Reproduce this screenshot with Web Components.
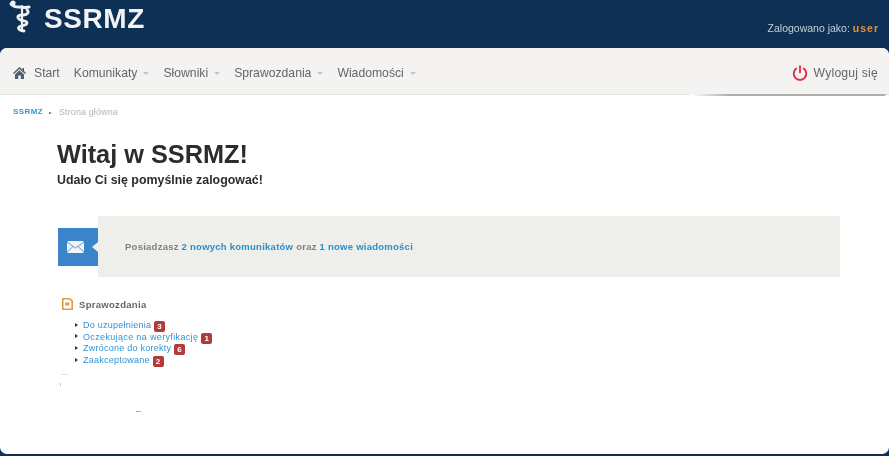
<!DOCTYPE html>
<html lang="pl">
<head>
<meta charset="utf-8">
<title>SSRMZ</title>
<style>
html,body{margin:0;padding:0;height:100%;}
body{background:#0e3055;font-family:"Liberation Sans",Arial,sans-serif;overflow:hidden;}
</style>
</head>
<body>
<app-shell>
  <top-bar slot="top" user="user"></top-bar>
  <main-nav slot="nav"></main-nav>
  <bread-crumbs></bread-crumbs>
  <welcome-box></welcome-box>
  <notice-box></notice-box>
  <report-list></report-list>
</app-shell>
<script>
class AppShell extends HTMLElement{
    constructor(){
        super();
        const el = this.attachShadow({mode:'open'})
        el.innerHTML = `
        <style>
        :host{display:flex;flex-direction:column;width:889px;height:456px;}
        .panel{
          flex:1;
          margin:0 0 2px 0;
          background:#fff;
          border-radius:7px;
          display:flex;
          flex-direction:column;
          overflow:hidden;
          filter:blur(.5px);
        }
        </style>
        <slot name="top"></slot>
        <div class="panel">
          <slot name="nav"></slot>
          <slot></slot>
        </div>`
    }
}
customElements.define('app-shell', AppShell)

class TopBar extends HTMLElement{
    constructor(){
        super();
        const el = this.attachShadow({mode:'open'})
        el.innerHTML = `
        <style>
        :host{display:flex;height:48px;flex:none;justify-content:space-between;background:#0e3055;filter:blur(.5px);}
        .brand{display:flex;align-items:flex-start;padding-left:9px;}
        svg{width:23px;height:34px;}
        h1{margin:2px 0 0 12px;font-size:28px;line-height:34px;font-weight:700;color:#f1f3f5;letter-spacing:.6px;}
        .who{align-self:flex-end;padding:0 10px 14px 0;font-size:10.500px;line-height:12px;color:#c6ced8;}
        b{color:#e8912c;letter-spacing:1px;}
        </style>
        <div class="brand">
          <svg viewBox="0 0 23 34" fill="none" stroke="#eef0f2" stroke-linecap="round">
            <path d="M2 4c2 3 5 3 8 3s7 1 10 0" stroke-width="3"/>
            <path d="M13 6v25" stroke-width="2.200"/>
            <path d="M18 10c3 2 0 5-4 5s-7 1-4 4 8 1 8 4-6 2-8 4 2 4 5 4" stroke-width="2.800"/>
            <circle cx="4" cy="3" r="2.600" fill="#eef0f2" stroke="none"/>
          </svg>
          <h1>SSRMZ</h1>
        </div>
        <div class="who">Zalogowano jako: <b>${this.getAttribute('user')}</b></div>`
    }
}
customElements.define('top-bar', TopBar)

class NavItem extends HTMLElement{
    constructor(){
        super();
        const el = this.attachShadow({mode:'open'})
        el.innerHTML = `
        <style>
        :host{display:inline-flex;align-items:center;font-size:12.200px;color:#5f6770;}
        i{margin-left:6px;margin-top:1px;border:3px solid transparent;border-top:3px solid #c4c4c4;border-bottom:0;}
        </style>
        <slot></slot>${this.hasAttribute('menu')?'<i></i>':''}`
    }
}
customElements.define('nav-item', NavItem)

class MainNav extends HTMLElement{
    constructor(){
        super();
        const el = this.attachShadow({mode:'open'})
        el.innerHTML = `
        <style>
        :host{display:flex;flex:none;align-items:center;background:#f5f3f2;border-bottom:1px solid #e4e4e2;position:relative;padding:4px 11px 0 13px;height:42px;}
        :host::after{content:"";position:absolute;left:690px;right:3px;bottom:-2px;height:2px;background:linear-gradient(90deg,#fff,#aeaeae 20%);border-radius:0 0 4px 4px;}
        ul{display:flex;align-items:center;list-style:none;margin:0;padding:0;flex:1;}
        li{display:flex;align-items:center;margin-right:14px;}
        li:first-child svg{width:13px;height:12px;margin-right:8px;}
        .out{display:flex;align-items:center;}
        .out svg{width:16px;height:16px;margin-right:6px;}
        .out nav-item{letter-spacing:.2px;}
        </style>
        <ul>
          <li><svg viewBox="0 0 13 12"><path fill="#4d5f70" d="M6.500 0 0 6l1 1 5.500-5 5.500 5 1-1-2-1.900V1H9.500v1.700zM2 7.500V12h3.200V8.500h2.600V12H11V7.500L6.500 3.300z"/></svg><nav-item>Start</nav-item></li>
          <li><nav-item menu>Komunikaty</nav-item></li>
          <li><nav-item menu>Słowniki</nav-item></li>
          <li><nav-item menu>Sprawozdania</nav-item></li>
          <li><nav-item menu>Wiadomości</nav-item></li>
        </ul>
        <div class="out">
          <svg viewBox="0 0 16 16" fill="none" stroke="#dc2f4a" stroke-width="1.900" stroke-linecap="round"><path d="M4.300 3.600a6.300 6.300 0 1 0 7.400 0"/><path d="M8 1.200v6"/></svg>
          <nav-item>Wyloguj się</nav-item>
        </div>`
    }
}
customElements.define('main-nav', MainNav)

class BreadCrumbs extends HTMLElement{
    constructor(){
        super();
        const el = this.attachShadow({mode:'open'})
        el.innerHTML = `
        <style>
        :host{display:flex;align-items:center;padding:11px 0 0 13px;height:12px;font-size:8px;line-height:12px;color:#b4b4b4;}
        a{color:#2f9bd8;font-weight:700;letter-spacing:.4px;}
        i{width:0;height:0;margin:2px 7px 0 6px;border:1.500px solid transparent;border-left:3px solid #555;border-right:0;}
        span{font-size:9px;letter-spacing:.1px;}
        </style>
        <a>SSRMZ</a><i></i><span>Strona główna</span>`
    }
}
customElements.define('bread-crumbs', BreadCrumbs)

class WelcomeBox extends HTMLElement{
    constructor(){
        super();
        const el = this.attachShadow({mode:'open'})
        el.innerHTML = `
        <style>
        :host{display:block;padding:19px 0 0 57px;color:#2c2c2c;}
        h2{margin:0;font-size:25.300px;line-height:34px;font-weight:700;}
        p{margin:0;font-size:12.400px;line-height:18px;font-weight:700;}
        </style>
        <h2>Witaj w SSRMZ!</h2>
        <p>Udało Ci się pomyślnie zalogować!</p>`
    }
}
customElements.define('welcome-box', WelcomeBox)

class NoticeBox extends HTMLElement{
    constructor(){
        super();
        const el = this.attachShadow({mode:'open'})
        el.innerHTML = `
        <style>
        :host{display:flex;align-items:center;margin:27px 49px 0 58px;height:61px;}
        .tile{width:40px;height:38px;flex:none;background:#3a84c9;display:flex;align-items:center;padding-left:9px;box-sizing:border-box;position:relative;}
        .tile::after{content:"";position:absolute;right:0;top:14px;border:5px solid transparent;border-right:6px solid #eeeeea;border-left:0;}
        svg{width:17px;height:12px;}
        .txt{flex:1;align-self:stretch;display:flex;align-items:center;background:#eeeeea;padding-left:27px;font-size:9.500px;font-weight:700;color:#808080;letter-spacing:.25px;white-space:pre;}
        a{color:#2b8fcf;}
        </style>
        <div class="tile">
          <svg viewBox="0 0 17 12"><rect width="17" height="12" rx="1.500" fill="#f1f4f8"/><path d="M0 1l8.500 6L17 1M0 11l6-5.500M17 11l-6-5.500" fill="none" stroke="#3a84c9" stroke-width=".8"/></svg>
        </div>
        <div class="txt">Posiadzasz <a>2 nowych komunikatów</a> oraz <a>1 nowe wiadomości</a></div>`
    }
}
customElements.define('notice-box', NoticeBox)

class CountBadge extends HTMLElement{
    constructor(){
        super();
        const el = this.attachShadow({mode:'open'})
        el.innerHTML = `
        <style>
        :host{display:inline-block;width:11px;height:11px;vertical-align:-1px;border-radius:2px;background:#b23a3c;color:#fff;font-size:8px;line-height:11px;font-weight:700;text-align:center;letter-spacing:0;}
        </style>
        <slot></slot>`
    }
}
customElements.define('count-badge', CountBadge)

class ReportList extends HTMLElement{
    constructor(){
        super();
        const el = this.attachShadow({mode:'open'})
        el.innerHTML = `
        <style>
        :host{display:block;margin:20px 0 0 62px;position:relative;}
        .head{display:flex;align-items:center;height:14px;font-size:9.500px;font-weight:700;color:#666;letter-spacing:.3px;}
        svg{width:11px;height:12px;margin-right:6px;}
        ul{list-style:none;margin:8px 0 0 0;padding:0 0 0 13px;}
        li{position:relative;padding-left:8px;height:11.700px;line-height:12px;font-size:9px;color:#2f93d6;letter-spacing:.25px;white-space:nowrap;}
        li.long{letter-spacing:.35px;}
        li::before{content:"";position:absolute;left:0;top:3.500px;border:2px solid transparent;border-left:3px solid #333;border-right:0;}
        .mark{position:absolute;}
        </style>
        <div class="head">
          <svg viewBox="0 0 11 12" fill="none" stroke="#e79a45" stroke-width="1.600"><path d="M.8.8h7l2.400 2.400v8H.8z"/><rect x="3.200" y="4.500" width="4" height="3" fill="#e79a45" stroke="none"/></svg>
          Sprawozdania
        </div>
        <ul>
          <li>Do uzupełnienia <count-badge>3</count-badge></li>
          <li class="long">Oczekujące na weryfikację <count-badge>1</count-badge></li>
          <li>Zwrócone do korekty <count-badge>6</count-badge></li>
          <li>Zaakceptowane <count-badge>2</count-badge></li>
        </ul>
        <div class="mark" style="left:-1px;top:77px;width:7px;height:1px;background:#f6dcc0"></div>
        <div class="mark" style="left:-2px;top:86px;width:1px;height:3px;background:#f0b987"></div>
        <div class="mark" style="left:74px;top:114px;width:5px;height:1px;background:#7cc0ea"></div>`
    }
}
customElements.define('report-list', ReportList)
</script>
</body>
</html>
